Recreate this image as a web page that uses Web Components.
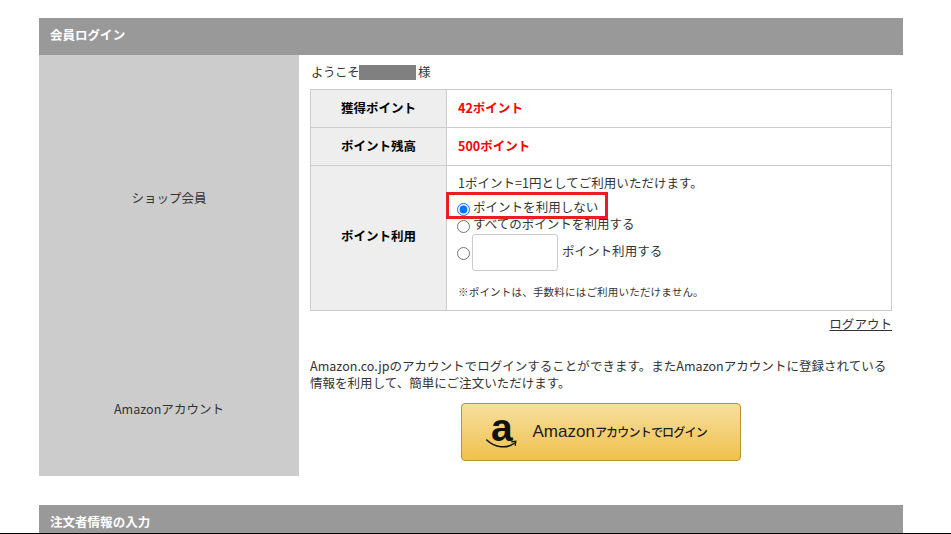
<!DOCTYPE html>
<html lang="ja"><head><meta charset="utf-8"><title>会員ログイン</title>
<style>
html,body{margin:0;padding:0;background:#fff}
body{font:12.5px/16px "Noto Sans CJK JP","Liberation Sans",sans-serif;color:#333;letter-spacing:.03px}
.page{box-sizing:border-box;height:534px;border-bottom:1px solid #000;overflow:hidden;padding:18px 48px 0 39px}
</style></head><body>
<div class="page">
  <section-head>会員ログイン</section-head>
  <form-row label="ショップ会員" style="height:286px;--lp:1px">
    <welcome-line></welcome-line>
    <points-table></points-table>
    <logout-link></logout-link>
  </form-row>
  <form-row label="Amazonアカウント" style="height:135px">
    <amazon-login></amazon-login>
  </form-row>
  <section-head style="margin-top:29px">注文者情報の入力</section-head>
</div>
<template id="t-head"><style>
:host{display:block;height:37px;background:#999;color:#fff;font-weight:700;line-height:34px;padding-left:11px}
</style><slot></slot></template>

<template id="t-row"><style>
:host{display:grid;grid-template-columns:260px 1fr}
.l{background:#ccc;display:flex;align-items:center;justify-content:center;padding-bottom:var(--lp,0);box-sizing:border-box}
.r{padding:0 11px;min-width:0}
</style><div class="l"></div><div class="r"><slot></slot></div></template>

<template id="t-welcome"><style>
:host{display:flex;align-items:center;height:16px;padding:9px 0 9px 1px;letter-spacing:-.5px}
.mask{width:57px;height:15px;background:#808080;margin:0 2px 0 0}
</style><span>ようこそ</span><span class="mask"></span><span>様</span></template>

<template id="t-table"><style>
:host{display:grid;grid-template-columns:135px 1fr;grid-template-rows:37px 37px 144px;border:1px solid #ccc;background:#ccc;gap:1px}
.h{background:#eee;color:#000;font-weight:700;display:flex;align-items:center;justify-content:center;padding-bottom:1px}
.h.tall{padding-bottom:5px}
.d{background:#fff;color:#f00;font-weight:700;display:flex;align-items:center;padding:0 0 1px 11px}
.u{background:#fff;padding:9px 0 0 11px}
.line{height:16px}
.mark{position:relative;margin-top:8px}
.mark i{position:absolute;left:-12px;top:-7px;width:156px;height:21px;border:3px solid #ec1c24}
.opt{display:flex;align-items:flex-start;height:17px}
input[type=radio]{width:13px;height:13px;margin:4px 3px 0 -1px;flex:none}
.amt{height:37px;margin-top:1px;align-items:center}
.amt input[type=radio]{margin:1px 2px 0 -1px}
.amt input[type=text]{box-sizing:border-box;width:86px;height:37px;margin:0 4px 0 0;border:1px solid #ccc;border-radius:3px;background:#fff;padding:0;flex:none}
.amt span{margin-top:-3px}
.note{font-size:10.5px;margin-top:13px;line-height:16px;letter-spacing:.2px}
</style>
<div class="h">獲得ポイント</div><div class="d">42ポイント</div>
<div class="h">ポイント残高</div><div class="d">500ポイント</div>
<div class="h tall">ポイント利用</div>
<div class="u">
  <div class="line">1ポイント=1円としてご利用いただけます。</div>
  <div class="opt mark"><input type="radio" name="p" checked><span>ポイントを利用しない</span><i></i></div>
  <div class="opt"><input type="radio" name="p"><span>すべてのポイントを利用する</span></div>
  <div class="opt amt"><input type="radio" name="p"><input type="text"><span>ポイント利用する</span></div>
  <div class="note">※ポイントは、手数料にはご利用いただけません。</div>
</div></template>

<template id="t-logout"><style>
:host{display:block;text-align:right;margin-top:5px}
a{color:#333;text-decoration:underline}
</style><a href="#">ログアウト</a></template>

<template id="t-amazon"><style>
:host{display:block;padding-top:16px}
p{margin:0;line-height:17px}
.b{box-sizing:border-box;display:flex;align-items:center;width:280px;height:58px;margin:12px 0 0 151px;border:1px solid #b8952f;border-radius:4px;background:linear-gradient(#f7df9f,#f0c14b);cursor:pointer;color:#1c1c1c}
svg{flex:none;display:block;margin-left:24px;overflow:visible}
.t{margin-left:14.5px;font:17px/20px "Liberation Sans",sans-serif;white-space:nowrap;letter-spacing:0;padding-bottom:1px}
.t small{font:500 12px/20px "Noto Sans CJK JP",sans-serif;letter-spacing:-.8px}
</style>
<p>Amazon.co.jpのアカウントでログインすることができます。またAmazonアカウントに登録されている<br>情報を利用して、簡単にご注文いただけます。</p>
<div class="b" role="button">
<svg width="32" height="46" viewBox="0 0 32 46"><text x="5" y="31.5" font-family="Liberation Sans" font-weight="700" font-size="39" fill="#111">a</text><path d="M.8 31C9 39 21 40 28.5 34" fill="none" stroke="#111" stroke-width="1.5" stroke-linecap="round"/><path d="M25.2 32.8l4.6-.6-.6 4.6" fill="none" stroke="#111" stroke-width="1.3"/></svg>
<span class="t">Amazon<small>アカウントでログイン</small></span>
</div></template>

<script>
function def(name,id,init){customElements.define(name,class extends HTMLElement{constructor(){super();const s=this.attachShadow({mode:'open'});s.appendChild(document.getElementById(id).content.cloneNode(true));if(init)init(this,s)}})}
def('section-head','t-head');
def('form-row','t-row',(el,s)=>{s.querySelector('.l').textContent=el.getAttribute('label')});
def('welcome-line','t-welcome');
def('points-table','t-table');
def('logout-link','t-logout');
def('amazon-login','t-amazon');
</script>
</body></html>
